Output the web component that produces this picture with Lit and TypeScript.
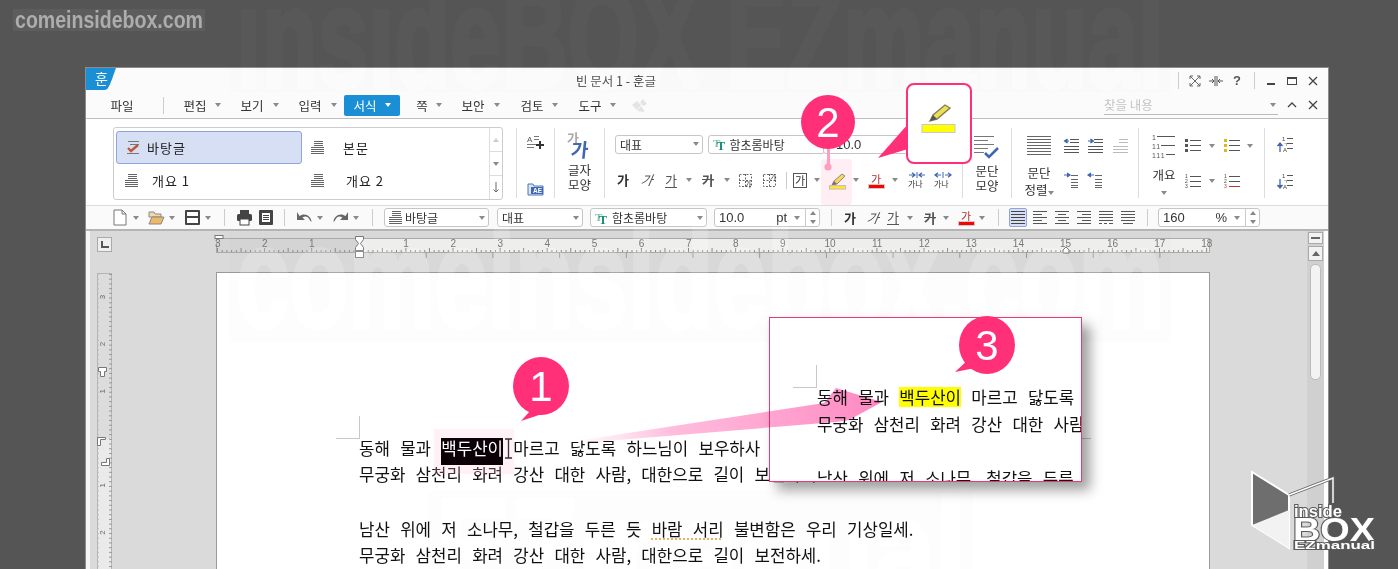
import { LitElement, html, svg, css, TemplateResult } from "lit";
import { customElement } from "lit/decorators.js";

const PINK = "#ff2f78";
const caret = html`<span class="caret"></span>`;
const sep = html`<span class="vsep"></span>`;

// every cell is centred exactly on a given x of the screenshot, wide content just overflows it
function strip(origin: number, items: [number, TemplateResult][]) {
  const cs = items.map((i) => i[0]);
  const half = cs.map((c, i) => {
    const l = i > 0 ? c - cs[i - 1] : Infinity;
    const r = i < cs.length - 1 ? cs[i + 1] - c : Infinity;
    return Math.min(l, r) / 2;
  });
  let prev = origin;
  return html`<div class="strip">
    ${items.map((it, i) => {
      const left = cs[i] - half[i];
      const m = left - prev;
      prev = cs[i] + half[i];
      return html`<span class="cell" style="width:${half[i] * 2}px;margin-left:${m}px">${it[1]}</span>`;
    })}
  </div>`;
}

const ico = (w: number, h: number, body: unknown) =>
  html`<svg class="ico" width=${w} height=${h} viewBox="0 0 ${w} ${h}">${body}</svg>`;

const hl = (rows: [number, number, number][], color = "#555") =>
  svg`${rows.map((r) => svg`<rect x=${r[0]} y=${r[2]} width=${r[1] - r[0]} height="1" fill=${color}></rect>`)}`;

const styleLines = ico(13, 14, hl([[3, 12, 0], [3, 12, 2], [3, 12, 4], [0, 13, 6], [0, 13, 8], [0, 13, 10], [0, 13, 12]], "#666"));
const styleCheck = ico(14, 14, svg`${hl([[2, 13, 0], [4, 13, 3], [1, 13, 12]], "#777")}
  <path d="M2 7l3 3 7-6" fill="none" stroke="#c0583a" stroke-width="2.4"></path>`);

const pen = (s = 1) =>
  svg`<g transform="scale(${s})"><path d="M2 13 L4 9 L12 2 L15 4 L7 12 Z" fill="#f4df3c" stroke="#7a7a50" stroke-width="1"></path>
  <path d="M2 13 L4 9 L7 12 Z" fill="#555"></path></g>`;
const hiIcon = ico(18, 17, svg`<g transform="translate(1,0)">${pen()}</g>
  <rect x="0.5" y="13.5" width="16" height="3.6" fill="#ffee00" stroke="#bbb"></rect>`);

const colorGa = html`<span class="ga-c"><i>가</i><b></b></span>`;

const dashBox = (txtRight: boolean) =>
  ico(15, 15, svg`<rect x="1.5" y="1.5" width="12" height="12" fill="none" stroke="#666" stroke-dasharray="2 1.5"></rect>
  <path d="M7.5 1v13M1 7.5h13" stroke="#666" stroke-dasharray="2 1.5"></path>
  <text x=${txtRight ? 8 : 7} y=${txtRight ? 7 : 14} font-size="7" fill="#333" font-family="Noto Sans CJK KR">가</text>`);

const kern = (inward: boolean) =>
  ico(18, 16, svg`<path d=${inward ? "M1 3h6M4 0.8L7 3 4 5.2M17 3h-6M14 0.8L11 3l3 2.2" : "M7 3H1M4 .8L1 3l3 2.2M11 3h6M14 .8L17 3l-3 2.2"} fill="none" stroke="#3f68b0" stroke-width="1.2"></path>
  <path d="M9 0v6" stroke="#3f68b0"></path>
  <text x="0" y="15" font-size="8" fill="#333" font-family="Noto Sans CJK KR">가나</text>`);

const paraLines = (rows: [number, number, number][], col = "#666") => hl(rows, col);
const bigAlign = ico(25, 20, paraLines([0, 3, 6, 9, 12, 15, 18].map((y) => [0, 24, y] as [number, number, number])));
const indentIco = (dir: number, gray = false) =>
  ico(15, 14, svg`${paraLines([[6, 15, 0], [6, 15, 3], [0, 15, 7], [0, 15, 10], [0, 15, 13]], gray ? "#bbb" : "#555")}
  ${gray ? svg`` : svg`<path d=${dir > 0 ? "M0 2h4M2.5 0L5.5 2 2.5 4" : "M5 2H1M3.5 0L.5 2l3 2"} fill="#3f68b0" stroke="#3f68b0" stroke-width="1.2"></path>`}`);
const lineIco = (dir: number) =>
  ico(15, 14, svg`${paraLines([[7, 14, 1], [7, 14, 5], [7, 14, 8], [7, 14, 11], [7, 14, 13]])}
  <path d=${dir > 0 ? "M0 1h5M3 -1l3 2-3 2" : "M6 1H1M3 -1L0 1l3 2"} fill="#3f68b0" stroke="#3f68b0" stroke-width="1.2"></path>`);
const numBig = html`<svg class="ico" width="24" height="24" viewBox="0 0 24 24">
  <text x="0" y="6" font-size="7" fill="#555" font-family="Liberation Sans">1</text><rect x="5" y="2" width="18" height="1" fill="#555"></rect>
  <text x="0" y="15" font-size="7" fill="#555" font-family="Liberation Sans" letter-spacing="1">11</text><rect x="9" y="11" width="14" height="1" fill="#555"></rect>
  <text x="0" y="24" font-size="7" fill="#555" font-family="Liberation Sans" letter-spacing="1">111</text><rect x="14" y="20" width="9" height="1" fill="#555"></rect></svg>`;
const bullet = (col: string) =>
  ico(16, 13, svg`${[1, 6, 11].map((y) => svg`<rect x="0" y=${y - 1} width="3" height="3" fill=${col}></rect><rect x="5" y=${y} width="11" height="1" fill="#555"></rect>`)}`);
const numList = (red: boolean) =>
  ico(16, 14, svg`${[0, 5, 10].map((y, i) => svg`<text x="0" y=${y + 4} font-size="5" fill=${red && i === 2 ? "#b33" : "#444"} font-family="Liberation Sans">${i + 1}</text>
   <rect x="5" y=${y + 2} width="11" height="1" fill=${red && i === 2 ? "#b33" : "#555"}></rect>`)}`);
const sortIco = (up: boolean) =>
  ico(16, 16, svg`<text x="5" y="5" font-size="6" fill="#444" font-family="Liberation Sans">1</text><rect x="10" y="2" width="6" height="1" fill="#555"></rect>
  <text x="6" y="10" font-size="5" fill="#444" font-family="Noto Sans CJK KR">ㄱ</text><rect x="10" y="7" width="6" height="1" fill="#555"></rect>
  <text x="6" y="16" font-size="6" fill="#444" font-family="Liberation Sans">A</text><rect x="10" y="12" width="6" height="1" fill="#555"></rect>
  <path d=${up ? "M3 16V8M0.5 10L3 7l2.5 3" : "M3 6v8M0.5 12L3 15l2.5-3"} stroke="#3f68b0" stroke-width="1.3" fill="#3f68b0"></path>`);

const tt = ico(14, 14, svg`<text x="0" y="10" font-size="11" font-weight="700" fill="#7cc4b0" font-family="Liberation Serif">T</text>
  <text x="4" y="13" font-size="12" font-weight="700" fill="#0b8a74" font-family="Liberation Serif">T</text>`);

const sel = (w: number, body: unknown) =>
  html`<span class="sel" style="width:${w}px"><span class="sel-t">${body}</span><span class="caret"></span></span>`;
const spinSel = (w: number, value: string, unit: string) =>
  html`<span class="sel" style="width:${w}px"><span class="sel-t num">${value}</span><span class="unit">${unit}</span><span class="caret"></span>
    <span class="spin"><i class="up"></i><i class="dn"></i></span></span>`;

const fmt = {
  b: html`<span class="ga b">가</span>`,
  i: html`<span class="ga i">가</span>`,
  u: html`<span class="ga u">가</span>`,
  s: html`<span class="ga s">가</span>`,
};

const LINE1 = html`동해 물과 <span class="picked">백두산이<svg class="ibeam" width="9" height="21" viewBox="0 0 9 21"><path d="M1 1h7M1 20h7M4.5 1v19" stroke="#333" stroke-width="1.3" fill="none"></path></svg></span> 마르고 닳도록 하느님이 보우하사`;
const LINE2 = "무궁화 삼천리 화려 강산 대한 사람, 대한으로 길이 보전하세.";
const LINE4 = html`남산 위에 저 소나무, 철갑을 두른 듯 <span class="spell">바람 서리</span> 불변함은 우리 기상일세.`;

function hRuler() {
  const ticks = [];
  for (let i = 0; i <= 210; i++) {
    const x = 1 + i * 4.71;
    ticks.push(svg`<rect x=${x} y=${i % 5 === 0 ? 13 : 15} width="1" height=${i % 5 === 0 ? 4 : 2} fill="#8c8c8c"></rect>`);
  }
  // tab stops hang under the ruler
  for (let x = 209.7; x < 990; x += 66.7) {
    ticks.push(svg`<rect x=${x} y="17" width="1" height="6" fill="#9a9a9a"></rect>`);
  }
  const labels = [];
  for (let n = -3; n <= 18; n++) {
    if (n === 0) continue;
    labels.push(svg`<text x=${143 + n * 47.1} y="12" text-anchor="middle" font-size="10" fill="#777" font-family="Liberation Sans">${Math.abs(n)}</text>`);
  }
  return html`<svg class="hruler" width="1000" height="26" viewBox="0 0 1000 26">
    <rect x="0.5" y="3.5" width="993" height="14" fill="#d6d6d6" stroke="#aaa"></rect>
    <rect x="143" y="4" width="850" height="13" fill="#f0f0ee"></rect>
    ${ticks}${labels}
    <rect x="-1" y="0.5" width="8" height="3" fill="#fff" stroke="#777"></rect>
    <path d="M139.5 1.5h8v3l-3 4 3 4v3h-8v-3l3-4-3-4z" fill="#fff" stroke="#777"></path>
    <rect x="139.5" y="16.5" width="8" height="6" fill="#fff" stroke="#777"></rect>
    <path d="M847 18v-3l3-3 3 3v3z" fill="#fff" stroke="#777"></path>
  </svg>`;
}

function vRuler() {
  const ticks = [];
  for (let i = 0; i < 66; i++) {
    const y = 1 + i * 4.71;
    ticks.push(svg`<rect x=${12} y=${y} width="3" height="1" fill="#999"></rect>`);
    ticks.push(svg`<rect x=${0} y=${y} width="2" height="1" fill="#bbb"></rect>`);
  }
  const labels = [3, 2, 1, -1, -2].map((n, i) => {
    const y = 24 + (i < 3 ? i : i + 1) * 47.1;
    return svg`<text transform="translate(8 ${y}) rotate(-90)" text-anchor="middle" font-size="8" fill="#666" font-family="Liberation Sans">${Math.abs(n)}</text>`;
  });
  return html`<svg class="vruler" width="20" height="296" viewBox="0 0 20 296">
    <rect x="0.5" y="0.5" width="14" height="296" fill="#eaeaea" stroke="#b5b5b5"></rect>
    <rect x="1" y="1" width="13" height="165" fill="#dcdcdc"></rect>
    ${ticks}${labels}
    <path d="M1.5 94.5h8v4h-2v5h-4v-5h-2z" fill="#fff" stroke="#777"></path>
    <path d="M0.5 164.5h8v2h-5v6h-3z" fill="#fff" stroke="#777"></path>
    <path d="M12.5 185.5v7h-8v-3h5v-4z" fill="#fff" stroke="#777"></path>
  </svg>`;
}

@customElement("app-root")
export class AppRoot extends LitElement {
  static styles = css`
    :host {
      display: block;
      position: relative;
      width: 1398px;
      height: 569px;
      overflow: hidden;
      background: #555;
      padding: 67px 69px 0 85px;
      box-sizing: border-box;
      font-family: "Noto Sans CJK KR", "Noto Sans", sans-serif;
      color: #333;
    }
    .layer {
      position: absolute;
      left: 0;
      top: 0;
      pointer-events: none;
    }
    .wm-dark { opacity: 0.018; }
    .wm-light { opacity: 0.14; z-index: 1; clip-path: inset(68px 69px 0 85px); }
    .brand { z-index: 3; }
    .arrow { z-index: 3; mix-blend-mode: multiply; }
    .window {
      width: 1244px;
      height: 502px;
      border: 1px solid #8c8c8c;
      border-bottom: 0;
      box-sizing: border-box;
      background: #fbfbfb;
      display: flex;
      flex-direction: column;
    }
    .title {
      height: 25px;
      display: flex;
      align-items: center;
      flex: none;
    }
    .logo { flex: none; align-self: flex-start; }
    .title-t { margin-left: 460px; font-size: 12.5px; width: 90px; white-space: nowrap; }
    .q { font-family: "Liberation Sans", sans-serif; font-size: 13px; color: #555; }
    .menu {
      height: 26px;
      flex: none;
      display: flex;
      align-items: center;
      font-size: 12.5px;
      border-bottom: 1px solid #bdbdbd;
      box-sizing: border-box;
      padding-bottom: 1px;
    }
    .menu .strip { height: 100%; }
    .on {
      display: inline-flex;
      flex: none;
      align-items: center;
      justify-content: center;
      gap: 8px;
      width: 56px;
      height: 21px;
      background: #1a8fd6;
      border-radius: 2px;
      color: #fff;
    }
    .on .caret { border-top-color: #fff; }
    .find {
      flex: none;
      width: 174px;
      height: 19px;
      border-bottom: 1px solid #bbb;
      display: flex;
      align-items: center;
      justify-content: space-between;
      font-size: 12.5px;
      color: #c4c4c4;
      padding-right: 2px;
      box-sizing: border-box;
    }
    .ribbon {
      height: 87px;
      flex: none;
      background: #fff;
      display: flex;
      border-bottom: 1px solid #dcdcdc;
      box-sizing: border-box;
    }
    .stylebox {
      margin: 8px 0 0 27px;
      width: 390px;
      height: 73px;
      border: 1px solid #ccc;
      border-radius: 3px;
      box-sizing: border-box;
      display: flex;
      flex: none;
      background: #fff;
    }
    .stylegrid {
      flex: 1;
      display: grid;
      grid-template-columns: 186px 1fr;
      grid-template-rows: 33px 33px;
      padding: 3px 2px;
      font-size: 13px;
      color: #222;
    }
    .st { display: flex; align-items: center; padding-left: 9px; gap: 14px; }
    .st.sel-st {
      background: #d6dff3;
      border: 1px solid #8fa3dc;
      border-radius: 3px;
      gap: 7px;
      box-sizing: border-box;
    }
    .st-t { letter-spacing: 1px; }
    .st-t.w { margin-left: 5px; }
    .st-t.m { margin-left: 8px; }
    .scr {
      width: 12px;
      border-left: 1px solid #ddd;
      display: flex;
      flex-direction: column;
      flex: none;
    }
    .scr span.b {
      flex: 1;
      display: flex;
      align-items: center;
      justify-content: center;
      border-bottom: 1px solid #ddd;
    }
    .scr span.b:last-child { border-bottom: 0; }
    .scr i { width: 0; height: 0; border-left: 3.5px solid transparent; border-right: 3.5px solid transparent; border-bottom: 4px solid #ccc; }
    .col {
      flex: none;
      box-sizing: border-box;
      margin-top: 9px;
      height: 70px;
      border-right: 1px solid #ddd;
      display: flex;
      flex-direction: column;
      align-items: center;
    }
    .gap { width: 14px; border-right: 1px solid #ddd; }
    .c1 { width: 38px; justify-content: space-between; padding: 7px 0 2px; }
    .c2 { width: 50px; font-size: 12.5px; line-height: 15px; text-align: center; padding-top: 4px; }
    .c2 .ico { margin-bottom: 5px; }
    .c3 { width: 358px; align-items: stretch; }
    .c3 .strip { height: 20px; }
    .c3 .r1 { margin-top: 6px; }
    .c3 .r2 { margin-top: 16px; }
    .c4 { width: 49px; font-size: 12.5px; line-height: 15px; text-align: center; padding-top: 8px; }
    .c4 .ico { margin-bottom: 3px; }
    .c5 { width: 127px; align-items: stretch; font-size: 12.5px; line-height: 17px; }
    .c6 { width: 126px; align-items: stretch; font-size: 12.5px; }
    .c7 { width: 40px; border-right: 0; justify-content: space-between; padding: 8px 0 9px; }
    .rr { height: 35px; }
    .rr .strip { height: 100%; }
    .stack { display: flex; flex-direction: column; align-items: center; flex: none; line-height: 17px; }
    .stack > .caret { margin-top: 8px; }
    .toolbar {
      height: 25px;
      flex: none;
      display: flex;
      align-items: center;
      background: #fafafa;
      border-bottom: 2px solid #b4b4b4;
      box-sizing: border-box;
    }
    .toolbar .strip { height: 100%; }
    .strip { display: flex; align-items: center; flex: none; }
    .cell { display: flex; align-items: center; justify-content: center; flex: none; height: 100%; white-space: nowrap; }
    .ico { display: block; flex: none; overflow: visible; }
    .caret {
      display: inline-block;
      flex: none;
      width: 0;
      height: 0;
      border-left: 3.5px solid transparent;
      border-right: 3.5px solid transparent;
      border-top: 4px solid #8a8a8a;
    }
    .vsep { display: block; flex: none; width: 1px; height: 17px; background: #ccc; }
    .sel {
      position: relative;
      display: flex;
      flex: none;
      align-items: center;
      height: 19px;
      border: 1px solid #c6c6c6;
      border-radius: 3px;
      background: #fff;
      box-sizing: border-box;
      padding: 0 3px 0 4px;
      font-size: 12px;
      color: #333;
    }
    .sel-t { flex: 1; display: flex; align-items: center; gap: 3px; white-space: nowrap; }
    .sel-t.num, .num13 { font-family: "Liberation Sans", sans-serif; font-size: 13px; }
    .num13 { margin-left: 8px; }
    .unit { font-family: "Liberation Sans", sans-serif; font-size: 13px; margin-right: 7px; }
    .spin {
      display: flex;
      flex-direction: column;
      justify-content: space-around;
      align-items: center;
      width: 13px;
      height: 100%;
      margin: 0 -3px 0 5px;
      border-left: 1px solid #ccc;
    }
    .spin i { width: 0; height: 0; border-left: 3px solid transparent; border-right: 3px solid transparent; }
    .spin .up { border-bottom: 4px solid #888; }
    .spin .dn { border-top: 4px solid #888; }
    .alon { display: flex; align-items: center; justify-content: center; width: 18px; height: 19px; flex: none; background: #d6dff3; border: 1px solid #8fa3dc; border-radius: 2px; box-sizing: border-box; }
    .ga { font-size: 13px; color: #555; line-height: 14px; display: inline-block; flex: none; }
    .ga.b { font-weight: 700; color: #333; }
    .ga.i { font-style: italic; transform: skewX(-10deg); }
    .ga.u { border-bottom: 1px solid #555; }
    .ga.s { text-decoration: line-through; font-weight: 700; }
    .ga-box { border: 1px solid #555; font-size: 11px; line-height: 13px; padding: 0 1px; flex: none; }
    .ga-c { display: flex; flex-direction: column; align-items: center; line-height: 12px; flex: none; }
    .ga-c i { font-style: normal; font-size: 11px; color: #b03030; }
    .ga-c b { width: 15px; height: 3px; background: #f00; outline: 1px solid #ccc; }
    .main { flex: 1; min-height: 0; display: flex; background: #dadada; overflow: hidden; }
    .rail { width: 4px; flex: none; background: #f5f5f5; }
    .vcol { width: 16px; flex: none; margin-left: 7px; padding-top: 6px; }
    .corner {
      width: 15px;
      height: 15px;
      border: 1px solid #aaa;
      background: #eee;
      box-sizing: border-box;
      display: flex;
      align-items: center;
      justify-content: center;
      margin-bottom: 21px;
    }
    .corner::after { content: ""; width: 6px; height: 5px; border-left: 2px solid #555; border-bottom: 2px solid #555; }
    .doc { width: 994px; flex: none; margin-left: 103px; }
    .hruler { display: block; margin-top: 4px; overflow: visible; }
    .vruler { display: block; overflow: visible; }
    .page {
      position: relative;
      margin-top: 11px;
      height: 320px;
      background: #fff;
      border: 1px solid #9a9a9a;
      border-bottom: 0;
      box-sizing: border-box;
      padding: 162px 0 0 142px;
    }
    .mark { position: absolute; border: 0 solid #c8c8c8; width: 23px; height: 22px; }
    .mark.l { left: 119px; top: 143px; border-width: 0 1px 1px 0; }
    .mark.r { left: 850px; top: 165px; height: 0; width: 24px; border-width: 1px 0 0 0; }
    .txt {
      position: relative;
      z-index: 2;
      font-size: 16.8px;
      line-height: 27px;
      word-spacing: 6.5px;
      color: #111;
      white-space: nowrap;
    }
    .line { height: 26px; }
    .blank { height: 29px; }
    .picked {
      position: relative;
      display: inline-block;
      height: 27px;
      line-height: 21px;
      background: #0a0005;
      color: #fff;
      box-shadow: 2px 0 0 9px rgba(255, 190, 215, 0.22);
    }
    .ibeam { position: absolute; left: calc(100% + 1px); top: 0; }
    .spell { text-decoration: underline dotted #e49a30; text-underline-offset: 3px; }
    .side {
      margin-left: auto;
      width: 21px;
      flex: none;
      display: flex;
      background: #fff;
    }
    .track {
      width: 17px;
      flex: none;
      background: #d0d0d0;
      display: flex;
      flex-direction: column;
      align-items: center;
      padding-top: 1px;
    }
    .sb {
      width: 15px;
      height: 12px;
      box-sizing: border-box;
      border: 1px solid #aaa;
      background: #f2f2f2;
      display: flex;
      align-items: center;
      justify-content: center;
      margin-bottom: 2px;
    }
    .sb.tall { height: 15px; }
    .sb.tall::after { content: ""; border-left: 4px solid transparent; border-right: 4px solid transparent; border-bottom: 5px solid #666; }
    .sb.min::after { content: ""; width: 9px; height: 2px; background: #666; }
    .thumb { width: 11px; height: 116px; margin-top: 1px; background: #f3f3f3; border: 1px solid #bbb; box-sizing: border-box; border-radius: 5px; }
    .inset {
      position: absolute;
      z-index: 2;
      left: 769px;
      top: 317px;
      width: 313px;
      height: 165px;
      box-sizing: border-box;
      border: 1px solid #e63c74;
      background: #fff;
      overflow: hidden;
      box-shadow: 8px 8px 12px rgba(0, 0, 0, 0.38);
      padding: 66px 0 0 47px;
    }
    .inset .mark.l { left: 23px; top: 47px; }
    .inset .line { height: 27px; }
    .inset .blank { height: 27px; }
    .inset .picked {
      background: #ffff00;
      color: #111;
      box-shadow: none;
      height: 20px;
    }
    .tint { position: absolute; z-index: 2; left: 821px; top: 159px; width: 31px; height: 46px; background: rgba(255, 190, 215, 0.24); border-radius: 3px; }
    .callbox {
      position: absolute;
      z-index: 3;
      left: 906px;
      top: 83px;
      width: 66px;
      height: 81px;
      box-sizing: border-box;
      border: 2px solid #ff2f78;
      border-radius: 8px;
      background: #fff;
      display: flex;
      justify-content: center;
      padding-top: 17px;
    }
    .logo-t { stroke: #5a5a5a; stroke-width: 2px; paint-order: stroke; }
  `;

  private watermark(cls: string) {
    const rect = (x: number, y: number, w: number, h: number) =>
      svg`<rect x=${x} y=${y} width=${w} height=${h} fill="#8a8478" opacity=".12"></rect>`;
    const t = (x: number, y: number, w: number, s: string) =>
      svg`<text x=${x} y=${y} font-size="145" font-weight="700" fill="#fff" stroke="#fff" stroke-width="4" font-family="Liberation Sans" textLength=${w} lengthAdjust="spacingAndGlyphs">${s}</text>`;
    return html`<svg class="layer ${cls}" width="1398" height="569" viewBox="0 0 1398 569">
      ${rect(230, 0, 940, 92)}${t(236, 88, 928, "insideBOX EZmanual")}
      ${rect(229, 232, 942, 110)}${t(236, 328, 928, "comeinsidebox.com")}
      ${rect(428, 491, 545, 78)}${t(436, 600, 530, "EZmanual")}
    </svg>`;
  }

  private callouts() {
    const bubble = (cx: number, cy: number, rx: number, ry: number, tail: string, n: string) => svg`
      <path d=${tail} fill=${PINK}></path>
      <ellipse cx=${cx} cy=${cy} rx=${rx} ry=${ry} fill=${PINK}></ellipse>
      <text x=${cx} y=${cy + 15} text-anchor="middle" font-size="42" fill="#fff" font-family="Liberation Sans">${n}</text>`;
    return svg`
      ${bubble(541, 386, 28, 29, "M531 410L521 421 548 412Z", "1")}
      ${bubble(987, 345, 28, 29, "M975 368L955 372 970 358Z", "3")}
      <path d="M827 145h3v22h-3z" fill="#ff9fbf"></path>
      <circle cx="828" cy="167" r="3.6" fill="#ff9fbf"></circle>
      ${bubble(828, 122, 27, 27, "", "2")}
      <path d="M908 124L878 158 908 149Z" fill=${PINK}></path>`;
  }

  render() {
    return html`
      ${this.watermark("wm-dark")}
      <div class="window">
        <div class="title">
          <svg class="logo" width="30" height="22" viewBox="0 0 30 22">
            <path d="M0 0H30C27 8 25 15 22 20Q21 22 17 22H0Z" fill="#1a8fd6"></path>
            <text x="9" y="16" font-size="14" fill="#fff" font-family="Noto Sans CJK KR">훈</text>
          </svg>
          <span class="title-t">빈 문서 1 - 훈글</span>
          ${strip(666, [
            [1178, sep],
            [1195, ico(12, 12, svg`<path d="M1 4V1h3M8 1h3v3M11 8v3H8M4 11H1V8M1 1l10 10M11 1L1 11" fill="none" stroke="#666"></path>`)],
            [1216, ico(14, 10, svg`<path d="M6 0v10M8 0v10M0 5h5M3 3l2 2-2 2M14 5H9M11 3L9 5l2 2" fill="none" stroke="#555"></path>`)],
            [1237, html`<b class="q">?</b>`],
            [1254, sep],
            [1271, ico(10, 10, svg`<rect x="1" y="7" width="8" height="2" fill="#444"></rect>`)],
            [1292, ico(10, 10, svg`<rect x=".5" y="1.5" width="9" height="7" fill="none" stroke="#444"></rect><rect x="0" y="1" width="10" height="2" fill="#444"></rect>`)],
            [1313, ico(10, 10, svg`<path d="M1 1l8 8M9 1L1 9" stroke="#444" stroke-width="1.3"></path>`)],
          ])}
        </div>
        <div class="menu">
          ${strip(86, [
            [122, html`<span>파일</span>`],
            [163, sep],
            [195, html`<span>편집</span>`],
            [218, caret],
            [252, html`<span>보기</span>`],
            [276, caret],
            [310, html`<span>입력</span>`],
            [334, caret],
            [372, html`<span class="on">서식 ${caret}</span>`],
            [422, html`<span>쪽</span>`],
            [439, caret],
            [473, html`<span>보안</span>`],
            [497, caret],
            [532, html`<span>검토</span>`],
            [555, caret],
            [590, html`<span>도구</span>`],
            [613, caret],
            [639, ico(15, 13, svg`<path d="M0 6l5-4 4 4-4 5zM8 3l3-3 4 5-4 2zM5 12l4-5 4 6z" fill="#e4e4e4"></path>`)],
            [1191, html`<div class="find"><span>찾을 내용</span>${caret}</div>`],
            [1292, ico(12, 10, svg`<path d="M2 7l4-4 4 4" fill="none" stroke="#444" stroke-width="1.3"></path>`)],
            [1313, ico(10, 10, svg`<path d="M1 1l8 8M9 1L1 9" stroke="#444" stroke-width="1.3"></path>`)],
          ])}
        </div>
        <div class="ribbon">
          <div class="stylebox">
            <div class="stylegrid">
              <div class="st sel-st">${styleCheck}<span class="st-t">바탕글</span></div>
              <div class="st">${styleLines}<span class="st-t w">본문</span></div>
              <div class="st">${styleLines}<span class="st-t">개요 1</span></div>
              <div class="st">${styleLines}<span class="st-t m">개요 2</span></div>
            </div>
            <div class="scr">
              <span class="b"><i></i></span>
              <span class="b">${caret}</span>
              <span class="b">${ico(8, 11, svg`<path d="M4 0v10M1.5 7.5L4 10l2.5-2.5" fill="none" stroke="#666"></path>`)}</span>
            </div>
          </div>
          <div class="col gap"></div>
          <div class="col c1">
            ${ico(17, 15, svg`<text x="0" y="7" font-size="8" fill="#555" font-family="Liberation Sans">A</text>
              ${hl([[7, 12, 1], [7, 12, 4], [0, 10, 9], [0, 7, 12]], "#777")}
              <path d="M9 10h8M13 6v8" stroke="#333" stroke-width="2"></path>`)}
            ${ico(17, 15, svg`<path d="M1 3h5l1 2h9v9H1z" fill="#dbe5f4" stroke="#4a75b8"></path><rect x="4" y="6" width="12" height="7" fill="#3f68b0"></rect>
              <text x="6" y="12" font-size="6.5" font-weight="700" fill="#fff" font-family="Liberation Sans">AE</text>`)}
          </div>
          <div class="col c2">
            ${ico(24, 25, svg`<text x="-1" y="11" font-size="13" fill="#aaa" font-family="Noto Sans CJK KR" font-weight="700">가</text>
              <text x="3" y="25" font-size="19" fill="#3f68b0" font-family="Noto Sans CJK KR" font-weight="700" transform="skewX(-6) translate(2 0)">가</text>`)}
            <span>글자</span><span>모양</span>
          </div>
          <div class="col c3">
            <div class="r1">
              ${strip(605, [
                [659, sel(88, "대표")],
                [766, sel(117, html`${tt}<span>함초롬바탕</span>`)],
                [866, sel(86, html`<span class="num13">10.0</span>`)],
              ])}
            </div>
            <div class="r2">
              ${strip(605, [
                [623, fmt.b], [647, fmt.i], [671, fmt.u], [689, caret], [708, fmt.s], [727, caret],
                [745, dashBox(false)], [769, dashBox(true)], [786, sep],
                [800, html`<span class="ga-box">가</span>`], [817, caret], [838, hiIcon], [856, caret],
                [876, colorGa], [895, caret], [917, kern(true)], [943, kern(false)],
              ])}
            </div>
          </div>
          <div class="col c4">
            ${ico(26, 24, svg`${hl([[0, 20, 0], [0, 14, 4], [0, 20, 8], [0, 14, 12], [0, 10, 16]], "#777")}
              <path d="M11 17l4 4 9-9" fill="none" stroke="#3f68b0" stroke-width="2.6"></path>`)}
            <span>문단</span><span>모양</span>
          </div>
          <div class="col c5">
            <div class="rr">
              ${strip(1012, [
                [1039, bigAlign],
                [1071, indentIco(-1)],
                [1095, indentIco(1)],
                [1120, indentIco(1, true)],
              ])}
            </div>
            <div class="rr">
              ${strip(1012, [
                [1039, html`<span class="stack"><span>문단</span><span>정렬${caret}</span></span>`],
                [1071, lineIco(1)],
                [1095, lineIco(-1)],
              ])}
            </div>
          </div>
          <div class="col c6">
            <div class="rr">
              ${strip(1139, [
                [1164, numBig],
                [1193, bullet("#555")],
                [1212, caret],
                [1232, bullet("#d9b820")],
                [1250, caret],
              ])}
            </div>
            <div class="rr">
              ${strip(1139, [
                [1164, html`<span class="stack"><span>개요</span>${caret}</span>`],
                [1193, numList(false)],
                [1212, caret],
                [1232, numList(true)],
              ])}
            </div>
          </div>
          <div class="col c7">${sortIco(true)}${sortIco(false)}</div>
        </div>
        <div class="toolbar">
          ${strip(86, [
            [120, ico(14, 17, svg`<path d="M1 1h8l4 4v11H1zM9 1v4h4" fill="#fff" stroke="#777"></path>`)],
            [136, caret],
            [156, ico(17, 15, svg`<path d="M1 2h5l1 2h6v3H1z" fill="#f3d9a8" stroke="#888"></path><path d="M1 14l3-7h12l-3 7z" fill="#edb868" stroke="#888"></path>`)],
            [172, caret],
            [192, ico(15, 15, svg`<rect x="0" y="0" width="15" height="15" rx="1" fill="#444"></rect><rect x="2" y="2" width="11" height="4" fill="#fff"></rect><rect x="2" y="8" width="11" height="5" fill="#fff"></rect>`)],
            [208, caret],
            [224, sep],
            [244, ico(15, 15, svg`<rect x="3" y="0" width="9" height="4" fill="#444"></rect><rect x="0" y="4" width="15" height="7" rx="1.5" fill="#444"></rect><rect x="3" y="9" width="9" height="6" fill="#fff" stroke="#444"></rect>`)],
            [266, ico(14, 15, svg`<rect width="14" height="15" rx="1" fill="#444"></rect><path d="M3 3h8v9H3z" fill="#fff"></path>${hl([[4, 10, 5], [4, 10, 7], [4, 10, 9]], "#444")}`)],
            [284, sep],
            [304, ico(15, 11, svg`<path d="M0 0v8h8L5.5 5.5c3-2 6-1 7.5 3l1.5 1.5c0-6-7-10-12-6L0 0z" fill="#666"></path>`)],
            [320, caret],
            [340, ico(15, 11, svg`<path d="M15 0v8H7l2.5-2.5c-3-2-6-1-7.5 3L.5 10c0-6 7-10 12-6L15 0z" fill="#666"></path>`)],
            [356, caret],
            [372, sep],
            [436.5, sel(105, html`${styleLines}<span>바탕글</span>`)],
            [540, sel(86, "대표")],
            [648.5, sel(117, html`${tt}<span>함초롬바탕</span>`)],
            [767, spinSel(106, "10.0", "pt")],
            [831, sep],
            [850, fmt.b], [873, fmt.i], [893, fmt.u], [910, caret], [930, fmt.s], [946, caret],
            [966, colorGa], [982, caret], [998, sep],
            [1018, html`<span class="alon">${ico(14, 14, hl([0, 3, 6, 9, 12].map((y) => [0, 14, y] as [number, number, number]), "#444"))}</span>`],
            [1040, ico(14, 14, hl([[0, 14, 0], [0, 9, 3], [0, 14, 6], [0, 9, 9], [0, 14, 12]]))],
            [1062, ico(14, 14, hl([[0, 14, 0], [3, 11, 3], [0, 14, 6], [3, 11, 9], [0, 14, 12]]))],
            [1084, ico(14, 14, hl([[0, 14, 0], [5, 14, 3], [0, 14, 6], [5, 14, 9], [0, 14, 12]]))],
            [1106, ico(14, 14, hl([[0, 14, 0], [0, 14, 3], [0, 14, 6], [0, 14, 9], [0, 3, 12], [5, 8, 12], [10, 14, 12]]))],
            [1128, ico(14, 14, hl([[0, 14, 0], [0, 14, 3], [0, 14, 6], [0, 14, 9], [2, 12, 12]]))],
            [1147, sep],
            [1209, spinSel(102, "160", "%")],
          ])}
        </div>
        <div class="main">
          <div class="rail"></div>
          <div class="vcol">
            <div class="corner"></div>
            ${vRuler()}
          </div>
          <div class="doc">
            ${hRuler()}
            <div class="page">
              <div class="mark l"></div>
              <div class="mark r"></div>
              <div class="txt">
                <div class="line">${LINE1}</div>
                <div class="line">${LINE2}</div>
                <div class="blank"></div>
                <div class="line">${LINE4}</div>
                <div class="line">${LINE2}</div>
              </div>
            </div>
          </div>
          <div class="side">
            <div class="track">
              <div class="sb min"></div>
              <div class="sb tall"></div>
              <div class="thumb"></div>
            </div>
          </div>
        </div>
      </div>
      ${this.watermark("wm-light")}
      <div class="tint"></div>
      <div class="inset">
        <div class="mark l"></div>
        <div class="txt">
          <div class="line">동해 물과 <span class="picked">백두산이</span> 마르고 닳도록 하느님이</div>
          <div class="line">${LINE2}</div>
          <div class="blank"></div>
          <div class="line">남산 위에 저 소나무, 철갑을 두른 듯</div>
        </div>
      </div>
      <div class="callbox">
        ${ico(34, 30, svg`<g transform="translate(6,1)"><path d="M2 18L5 12 17 2 22 5 9 16Z" fill="#efe050" stroke="#808060" stroke-width="1.4"></path><path d="M2 18L5 12 9 16Z" fill="#555"></path></g>
          <rect x="0" y="22.5" width="33" height="8" fill="#ffff00" stroke="#c8c8c8"></rect>`)}
      </div>
      <svg class="layer arrow" width="1398" height="569" viewBox="0 0 1398 569">
        <defs>
          <linearGradient id="arw" gradientUnits="userSpaceOnUse" x1="582" y1="442" x2="882" y2="402">
            <stop offset="0" stop-color="#ffc0dc" stop-opacity="0.1"></stop>
            <stop offset="0.3" stop-color="#ffb0d6" stop-opacity="0.85"></stop>
            <stop offset="1" stop-color="#ff88c2"></stop>
          </linearGradient>
        </defs>
        <path d="M582 440L824 403 836 388 882 402 849 420 836 422 582 443Z" fill="url(#arw)"></path>
      </svg>
      <svg class="layer brand" width="1398" height="569" viewBox="0 0 1398 569">
        ${this.callouts()}
        <rect x="13" y="9" width="192" height="22" fill="#fff" opacity=".05"></rect>
        <text x="15" y="28" font-size="23" font-weight="700" fill="#adadad" font-family="Liberation Sans" textLength="188" lengthAdjust="spacingAndGlyphs">comeinsidebox.com</text>
        <path d="M1252 472L1289 495 1289 548 1252 525Z" fill="#6e6e6e" stroke="#fff" stroke-width="2"></path>
        <path d="M1252 525L1289 510V548Z" fill="#f2f2f2"></path>
        <path d="M1289 495L1333 478V503" fill="none" stroke="#666" stroke-width="3"></path>
        <path d="M1289 495L1333 478V503" fill="none" stroke="#fff" stroke-width="1.4"></path>
        <text class="logo-t" x="1294" y="517" font-size="16" font-weight="700" fill="#fff" font-family="Liberation Sans" textLength="48" lengthAdjust="spacingAndGlyphs">inside</text>
        <text class="logo-t" x="1293" y="541" font-size="33" font-weight="700" fill="#fff" font-family="Liberation Sans" textLength="82" lengthAdjust="spacingAndGlyphs">BOX</text>
        <text class="logo-t" x="1294" y="549" font-size="10" font-weight="700" fill="#fff" font-family="Liberation Sans" textLength="81" lengthAdjust="spacingAndGlyphs">EZmanual</text>
      </svg>
    `;
  }
}
